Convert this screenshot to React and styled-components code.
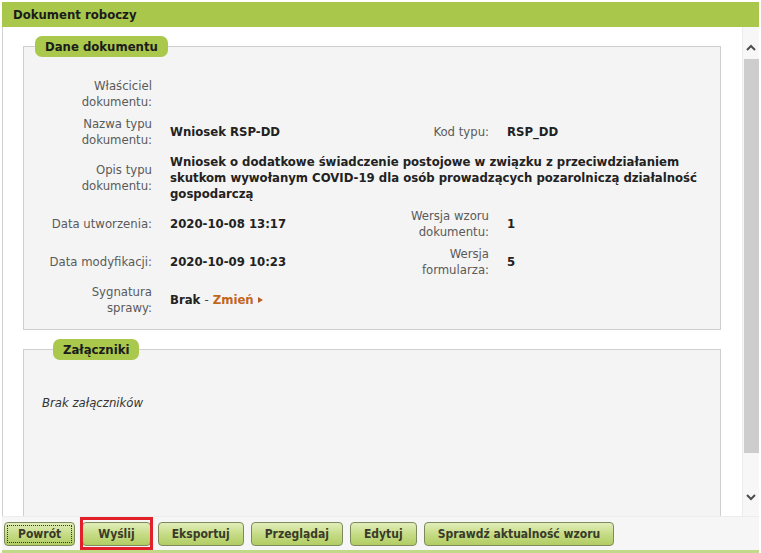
import React from "react";
import { createGlobalStyle, styled } from "styled-components";

const GlobalStyle = createGlobalStyle`
  html, body {
    margin: 0;
    padding: 0;
    background: #fff;
  }
  body {
    font-family: "DejaVu Sans Condensed", "DejaVu Sans", Verdana, sans-serif;
    font-stretch: condensed;
    font-size: 13px;
    color: #222;
  }
`;

const Frame = styled.div`
  width: 761px;
  height: 553px;
  box-sizing: border-box;
  padding: 2px 2px 0 2px;
  display: flex;
  flex-direction: column;
  overflow: hidden;
`;

const Header = styled.div`
  height: 25px;
  flex-shrink: 0;
  background: #a8c74b;
  display: flex;
  align-items: center;
  padding-left: 11px;
  font-weight: bold;
  color: #1b1b1b;
`;

const Body = styled.div`
  flex: 1;
  min-height: 0;
  display: flex;
  border-left: 1px solid #d0d0d0;
`;

const Content = styled.div`
  flex: 1;
  min-width: 0;
  overflow: hidden;
  padding: 9px 21px 0 20px;
  display: flex;
  flex-direction: column;
  gap: 9px;
`;

const Fieldset = styled.fieldset`
  margin: 0;
  padding: ${(p) => p.$pad || "21px 20px 10px 0"};
  border: 1px solid #cfcfcf;
  background: #f4f4f4;
  min-width: 0;
  flex-shrink: 0;
  ${(p) => p.$tall && "height: 300px;"}
`;

const Legend = styled.legend`
  margin-left: 11px;
  padding: 0 10px;
  height: 21px;
  line-height: 21px;
  border-radius: 7px;
  background: #a9c84c;
  font-weight: bold;
  color: #1b1b1b;
`;

const InfoGrid = styled.div`
  display: grid;
  grid-template-columns: 128px 221px 80px 1fr;
  column-gap: 18px;
  row-gap: 6px;
  line-height: 16px;
  align-items: center;
`;

const Label = styled.div`
  text-align: right;
  color: #5a5a5a;
`;

const Value = styled.div`
  font-weight: bold;
  color: #222;
  min-height: 16px;
  ${(p) => p.$span && `grid-column: ${p.$span};`}
`;

const Dash = styled.span`
  font-weight: normal;
  color: #444;
`;

const ChangeLink = styled.a`
  color: #c2661c;
  font-weight: bold;
  text-decoration: none;
  &::after {
    content: "";
    display: inline-block;
    margin-left: 4px;
    border-left: 5px solid #b8602a;
    border-top: 3.5px solid transparent;
    border-bottom: 3.5px solid transparent;
    vertical-align: 1px;
  }
`;

const Empty = styled.div`
  font-style: italic;
  color: #333;
`;

const Scrollbar = styled.div`
  width: 16px;
  flex-shrink: 0;
  border-left: 1px solid #ececec;
  background: #f7f7f7;
  display: flex;
  flex-direction: column;
  align-items: center;
  padding: 12px 0 10px;
`;

const ArrowBox = styled.div`
  height: 17px;
  display: flex;
  align-items: center;
  justify-content: center;
`;

const Thumb = styled.div`
  width: 15px;
  flex: 1;
  margin: 3px 0 36px;
  background: #cdcdcd;
`;

const ButtonBar = styled.div`
  flex-shrink: 0;
  height: 33px;
  display: flex;
  align-items: center;
  gap: 7px;
  padding: 0 0 0 2px;
  border-top: 1px solid #ededed;
  border-bottom: 3px solid #c3d98a;
  background: #f6f6f6;
`;

const Button = styled.button`
  position: relative;
  height: 24px;
  padding: 0 13px;
  font-family: inherit;
  font-stretch: condensed;
  font-size: 12px;
  font-weight: bold;
  color: #3a3a2a;
  border: 1px solid #7d8b5c;
  border-radius: 4px;
  background: linear-gradient(#e2eebb 0%, #c6dc86 50%, #b2cd63 100%);
  cursor: pointer;
  ${(p) => p.$focused && "outline: 1px dotted #333; outline-offset: -4px;"}
  ${(p) =>
    p.$marked &&
    `padding: 0 15px;
    &::after {
      content: "";
      position: absolute;
      top: -6px;
      bottom: -5px;
      left: -3px;
      right: -3px;
      border: 3px solid #e2202a;
    }`}
`;

const Chevron = ({ up }) => (
  <svg width="10" height="7" viewBox="0 0 10 7">
    <path
      d={up ? "M1 6 L5 2 L9 6" : "M1 1 L5 5 L9 1"}
      fill="none"
      stroke="#4d4d4d"
      strokeWidth="2"
    />
  </svg>
);

const App = () => (
  <>
    <GlobalStyle />
    <Frame>
      <Header>Dokument roboczy</Header>
      <Body>
        <Content>
          <Fieldset $pad="21px 20px 13px 0">
            <Legend>Dane dokumentu</Legend>
            <InfoGrid>
              <Label>Właściciel<br />dokumentu:</Label>
              <Value $span="2 / 5" />

              <Label>Nazwa typu<br />dokumentu:</Label>
              <Value>Wniosek RSP-DD</Value>
              <Label>Kod typu:</Label>
              <Value>RSP_DD</Value>

              <Label>Opis typu<br />dokumentu:</Label>
              <Value $span="2 / 5">
                Wniosek o dodatkowe świadczenie postojowe w związku z przeciwdziałaniem
                skutkom wywołanym COVID-19 dla osób prowadzących pozarolniczą działalność
                gospodarczą
              </Value>

              <Label>Data utworzenia:</Label>
              <Value>2020-10-08 13:17</Value>
              <Label>Wersja wzoru<br />dokumentu:</Label>
              <Value>1</Value>

              <Label>Data modyfikacji:</Label>
              <Value>2020-10-09 10:23</Value>
              <Label>Wersja<br />formularza:</Label>
              <Value>5</Value>

              <Label>Sygnatura<br />sprawy:</Label>
              <Value $span="2 / 5">
                Brak <Dash>-</Dash> <ChangeLink href="#">Zmień</ChangeLink>
              </Value>
            </InfoGrid>
          </Fieldset>

          <Fieldset $tall $pad="35px 20px 10px 18px">
            <Legend>Załączniki</Legend>
            <Empty>Brak załączników</Empty>
          </Fieldset>
        </Content>
        <Scrollbar>
          <ArrowBox><Chevron up /></ArrowBox>
          <Thumb />
          <ArrowBox><Chevron /></ArrowBox>
        </Scrollbar>
      </Body>
      <ButtonBar>
        <Button $focused>Powrót</Button>
        <Button $marked>Wyślij</Button>
        <Button>Eksportuj</Button>
        <Button>Przeglądaj</Button>
        <Button>Edytuj</Button>
        <Button>Sprawdź aktualność wzoru</Button>
      </ButtonBar>
    </Frame>
  </>
);

export default App;
